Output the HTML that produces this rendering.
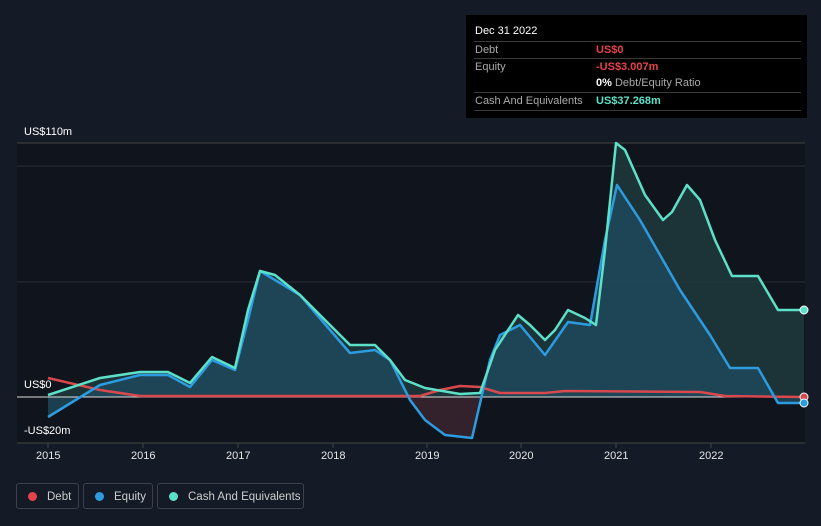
<!DOCTYPE html>
<html><head><style>
body{margin:0;width:821px;height:526px;background:#151b26;font-family:"Liberation Sans",sans-serif;overflow:hidden;position:relative}
.t{position:absolute;color:#fff;font-size:11px}
.ax{position:absolute;color:#e6e6e6;font-size:11px;top:450px}
.tip{position:absolute;left:466px;top:15px;width:341px;height:103px;background:#000;font-size:11px;color:#aaa}
.row{position:absolute;left:8px;width:327px;border-top:1px solid #3a3a3a;height:17px}
.leg{position:absolute;top:483px;height:26px;border:1px solid #3a404c;border-radius:3px;color:#ccc;font-size:11.5px;line-height:26px;box-sizing:border-box}
.leg i{display:inline-block;width:9px;height:9px;border-radius:50%;margin:0 10px 0 11px;vertical-align:-1px}
</style></head><body>
<svg width="821" height="526" style="position:absolute;left:0;top:0">
<rect x="17" y="143" width="788" height="300" fill="#10141c"/>
<line x1="17" y1="143" x2="805" y2="143" stroke="#444" />
<line x1="17" y1="166" x2="805" y2="166" stroke="#2a2e36"/>
<line x1="17" y1="282" x2="805" y2="282" stroke="#2a2e36"/>
<line x1="17" y1="443" x2="805" y2="443" stroke="#444"/>
<g stroke="#444"><line x1="48" y1="443" x2="48" y2="448"/><line x1="143" y1="443" x2="143" y2="448"/><line x1="238" y1="443" x2="238" y2="448"/><line x1="333" y1="443" x2="333" y2="448"/><line x1="427" y1="443" x2="427" y2="448"/><line x1="521" y1="443" x2="521" y2="448"/><line x1="616" y1="443" x2="616" y2="448"/><line x1="711" y1="443" x2="711" y2="448"/></g>
<polygon fill="#1f3a3c" opacity="0.85" points="48,397 48,395 100,378 140,372 168,372 190,383 212,357 235,368 248,310 260,271 275,275 300,295 330,325 350,345 375,345 390,360 405,380 425,388 460,394 480,393 495,350 518,315 530,325 545,340 555,330 568,310 585,318 596,325 605,250 616,143 625,150 645,195 663,220 672,212 687,185 700,200 715,240 732,276 758,276 778,310 804,310 804,397"/>
<polygon fill="#1f4a5e" opacity="0.8" points="48,397 48,417 100,385 140,375 168,375 190,387 212,360 235,370 248,320 260,271 300,295 330,330 350,353 375,350 390,360 410,400 425,420 445,435 472,438 490,360 500,335 520,325 545,355 568,322 590,325 605,240 617,185 640,220 680,290 710,335 730,368 758,368 778,403 804,403 804,397"/>
<polygon fill="#3a1c22" opacity="0.8" points="410,397 425,420 445,435 472,438 480,397"/>
<line x1="17" y1="397" x2="805" y2="397" stroke="#ddd" stroke-width="1"/>
<polyline fill="none" stroke="#d8494e" stroke-width="2.5" stroke-linejoin="round" points="48,378 100,390 140,396 420,396 440,390 460,386 480,387 500,393 545,393 565,391 700,392 725,396 804,397"/>
<polyline fill="none" stroke="#2d9be0" stroke-width="2.5" stroke-linejoin="round" points="48,417 100,385 140,375 168,375 190,387 212,360 235,370 248,320 260,271 300,295 330,330 350,353 375,350 390,360 410,400 425,420 445,435 472,438 490,360 500,335 520,325 545,355 568,322 590,325 605,240 617,185 640,220 680,290 710,335 730,368 758,368 778,403 804,403"/>
<polyline fill="none" stroke="#5de0c8" stroke-width="2.5" stroke-linejoin="round" points="48,395 100,378 140,372 168,372 190,383 212,357 235,368 248,310 260,271 275,275 300,295 330,325 350,345 375,345 390,360 405,380 425,388 460,394 480,393 495,350 518,315 530,325 545,340 555,330 568,310 585,318 596,325 605,250 616,143 625,150 645,195 663,220 672,212 687,185 700,200 715,240 732,276 758,276 778,310 804,310"/>
<circle cx="804" cy="310" r="4" fill="#5de0c8" stroke="#fff" stroke-width="1"/>
<circle cx="804" cy="397" r="4" fill="#d8494e" stroke="#fff" stroke-width="1"/>
<circle cx="804" cy="403" r="4" fill="#2d9be0" stroke="#fff" stroke-width="1"/>
</svg>
<div class="t" style="left:24px;top:126px">US$110m</div>
<div class="t" style="left:24px;top:379px">US$0</div>
<div class="t" style="left:24px;top:425px">-US$20m</div>
<div class="ax" style="left:36px">2015</div><div class="ax" style="left:131px">2016</div><div class="ax" style="left:226px">2017</div><div class="ax" style="left:321px">2018</div><div class="ax" style="left:415px">2019</div><div class="ax" style="left:509px">2020</div><div class="ax" style="left:604px">2021</div><div class="ax" style="left:699px">2022</div>
<div class="tip">
<div style="position:absolute;left:9px;top:10px;color:#fff">Dec 31 2022</div>
<div class="row" style="top:26px"><span style="position:absolute;left:1px;top:2px">Debt</span><span style="position:absolute;left:122px;top:2px;color:#e5434a;font-weight:bold">US$0</span></div>
<div class="row" style="top:43px"><span style="position:absolute;left:1px;top:2px">Equity</span><span style="position:absolute;left:122px;top:2px;color:#e5434a;font-weight:bold">-US$3.007m</span></div>
<div style="position:absolute;left:130px;top:62px"><b style="color:#fff">0%</b> Debt/Equity Ratio</div>
<div class="row" style="top:77px"><span style="position:absolute;left:1px;top:2px">Cash And Equivalents</span><span style="position:absolute;left:122px;top:2px;color:#5de0c8;font-weight:bold">US$37.268m</span></div>
<div class="row" style="top:95px;height:0"></div>
</div>
<div class="leg" style="left:16px;width:63px"><i style="background:#e5434a"></i>Debt</div>
<div class="leg" style="left:83px;width:70px"><i style="background:#2d9be0"></i>Equity</div>
<div class="leg" style="left:157px;width:147px"><i style="background:#5de0c8"></i>Cash And Equivalents</div>
</body></html>
